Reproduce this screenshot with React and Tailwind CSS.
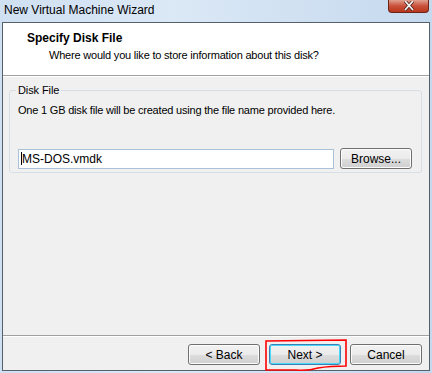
import React from "react";

const font = { fontFamily: '"Liberation Sans", Arial, sans-serif' };

function WinButton({ children, focused }) {
  return (
    <div
      className={`flex items-center justify-center w-[72px] h-[21px] rounded-[3px] border text-[12px] text-black ${
        focused
          ? "border-[#3c7fb1] shadow-[inset_0_0_0_1px_#48d8fb]"
          : "border-[#707070] shadow-[inset_0_0_0_1px_#fcfcfc]"
      } bg-[linear-gradient(#f2f2f2_0%,#ebebeb_50%,#dddddd_51%,#cfcfcf_100%)]`}
    >
      {children}
    </div>
  );
}

export default function App() {
  return (
    <div
      className="relative w-[432px] h-[373px] overflow-hidden flex flex-col bg-[linear-gradient(90deg,#cfe0f2,#dbe8f6_40%,#c5d9ee)]"
      style={font}
    >
      {/* title bar */}
      <div className="h-[22px] flex items-start justify-between">
        <span className="pl-[4px] pt-[3px] text-[12px] leading-[14px] text-black">
          New Virtual Machine Wizard
        </span>
        <div className="mr-[3px] w-[41px] h-[13px] rounded-b-[4px] border border-t-0 border-[#6b2418] bg-[linear-gradient(#e0a08f,#c9503a_50%,#b8361d)] flex items-center justify-center">
          <svg width="12" height="10" viewBox="0 0 12 10">
            <path d="M2 0 L10 9 M10 0 L2 9" stroke="#4a1a14" strokeWidth="3.2" />
            <path d="M2 0 L10 9 M10 0 L2 9" stroke="#f4f4f4" strokeWidth="1.8" />
          </svg>
        </div>
      </div>

      {/* client area */}
      <div className="mx-[2px] h-[349px] border border-[#55606b] flex flex-col bg-[#f0f0f0]">
        <div className="h-[53px] bg-white border-b border-[#a0a0a0] flex flex-col">
          <div className="pl-[24px] pt-[8px] text-[12px] leading-[14px] font-bold text-black">
            Specify Disk File
          </div>
          <div className="pl-[46px] pt-[3px] text-[11px] leading-[14px] tracking-[-0.2px] text-black">
            Where would you like to store information about this disk?
          </div>
        </div>

        <div className="flex-1 flex flex-col border-t border-white">
          <fieldset className="mt-[6px] ml-[6px] mr-[7px] h-[90px] border border-[#d5dfe5] rounded-[3px] px-[8px]">
            <legend className="ml-[-2px] px-[2px] text-[11px] leading-[14px] tracking-[-0.1px] text-black">
              Disk File
            </legend>
            <div className="mt-[6px] text-[11px] leading-[14px] tracking-[-0.2px] text-black">
              One 1 GB disk file will be created using the file name provided here.
            </div>
            <div className="mt-[31px] flex items-center gap-[6px]">
              <div className="w-[316px] h-[20px] bg-white border border-[#a9c1d9] flex items-center pl-[2px] text-[12px] text-black">
                <span className="w-[1px] h-[13px] bg-black" />
                <span>MS-DOS.vmdk</span>
              </div>
              <WinButton>Browse...</WinButton>
            </div>
          </fieldset>

          <div className="flex-1" />

          <div className="border-t border-[#a0a0a0] bg-[#f0f0f0]">
            <div className="border-t border-white h-[34px] flex justify-end items-start pt-[7px] pr-[7px] gap-[9px]">
              <WinButton>&lt; Back</WinButton>
              <WinButton focused>Next &gt;</WinButton>
              <WinButton>Cancel</WinButton>
            </div>
          </div>
        </div>
      </div>

      {/* red hand-drawn annotation */}
      <svg
        className="absolute left-0 top-0 pointer-events-none"
        width="432"
        height="373"
        viewBox="0 0 432 373"
      >
        <path
          d="M266 341 L346 340 L346 366 Q330 366 318 368 Q308 371 296 370 L266 370 Z"
          fill="none"
          stroke="#ff0000"
          strokeWidth="1.6"
        />
      </svg>
    </div>
  );
}
